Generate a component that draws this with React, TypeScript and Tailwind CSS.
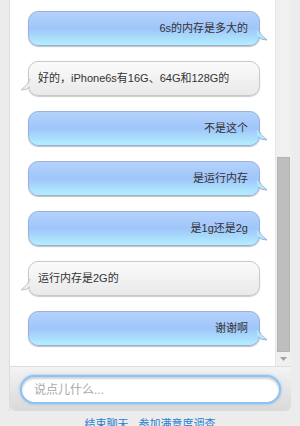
type Msg = { from: "me" | "them"; text: string }

const messages: Msg[] = [
  { from: "me", text: "6s的内存是多大的" },
  { from: "them", text: "好的，iPhone6s有16G、64G和128G的" },
  { from: "me", text: "不是这个" },
  { from: "me", text: "是运行内存" },
  { from: "me", text: "是1g还是2g" },
  { from: "them", text: "运行内存是2G的" },
  { from: "me", text: "谢谢啊" },
]

function Bubble({ msg }: { msg: Msg }) {
  if (msg.from === "me") {
    return (
      <div className="relative h-[35px] w-[232px] shrink-0 rounded-[10px] border border-[#9db0dc] bg-gradient-to-b from-[#b4d3fc] via-[#9fc5fa] to-[#b3effd] shadow-[0_1px_1px_rgba(0,0,0,0.25)] flex items-center justify-end pr-[11px]">
        <span className="text-[11px] text-[#333]">{msg.text}</span>
        {/* tail */}
        <svg className="absolute -right-[9px] bottom-[3px]" width="11" height="14" viewBox="0 0 11 14">
          <path d="M0 0 Q2 7 10 12 Q4 12 0 8 Z" fill="#b0e8fc" />
          <path d="M1 1 Q3 7 10 12 Q4 12 1 9" fill="none" stroke="#9db0dc" strokeWidth="1" />
        </svg>
      </div>
    )
  }
  return (
    <div className="relative h-[35px] w-[232px] shrink-0 rounded-[10px] border border-[#c9c9c9] bg-gradient-to-b from-[#fbfbfb] to-[#e9e9e9] shadow-[0_1px_1px_rgba(0,0,0,0.2)] flex items-center pl-[9px]">
      <span className="text-[11px] text-[#333]">{msg.text}</span>
      <svg className="absolute -left-[9px] bottom-[3px]" width="11" height="14" viewBox="0 0 11 14">
        <path d="M11 0 Q9 7 1 12 Q7 12 11 8 Z" fill="#ececec" />
        <path d="M10 1 Q8 7 1 12 Q7 12 10 9" fill="none" stroke="#c4c4c4" strokeWidth="1" />
      </svg>
    </div>
  )
}

function ScrollBar() {
  return (
    <div className="w-[16px] h-full bg-[#f0f0f0] border-l border-[#e6e6e6] flex flex-col items-center">
      <div className="h-[157px] shrink-0" />
      <div className="w-[13px] h-[195px] bg-[#bebebe] border border-[#b4b4b4]" />
      <div className="flex-1 flex items-center justify-center">
        <svg width="7" height="4" viewBox="0 0 7 4">
          <path d="M0 0 L7 0 L3.5 4 Z" fill="#a3a3a3" />
        </svg>
      </div>
    </div>
  )
}

export default function App() {
  return (
    <div className="w-[300px] h-[426px] overflow-hidden bg-[#ececec] font-['Liberation_Sans','Noto_Sans_CJK_SC',sans-serif]">
      <div className="ml-[9px] w-[282px] border-l border-[#dcdcdc]">
        <div className="flex h-[366px] bg-white">
          <div className="flex-1 flex flex-col gap-[15px] pt-[11px] pl-[18px] overflow-hidden">
            {messages.map((m, i) => (
              <Bubble key={i} msg={m} />
            ))}
          </div>
          <ScrollBar />
        </div>
        <div className="h-[45px] rounded-b-[6px] bg-gradient-to-b from-[#f3f3f3] to-[#d9d9d9] border-t border-[#dedede] px-[10px] pt-[8px]">
          <div className="h-[29px] rounded-full border-2 border-[#8ec3f2] bg-white shadow-[0_0_3px_rgba(80,160,240,0.6),inset_0_2px_2px_rgba(0,0,0,0.18)] flex items-center pl-[12px]">
            <span className="text-[12px] text-[#a8a8a8]">说点儿什么...</span>
          </div>
        </div>
      </div>
      <div className="flex justify-center gap-[10px] pt-[5px] text-[11px] text-[#2a7dd0]">
        <span>结束聊天</span>
        <span>参加满意度调查</span>
      </div>
    </div>
  )
}
